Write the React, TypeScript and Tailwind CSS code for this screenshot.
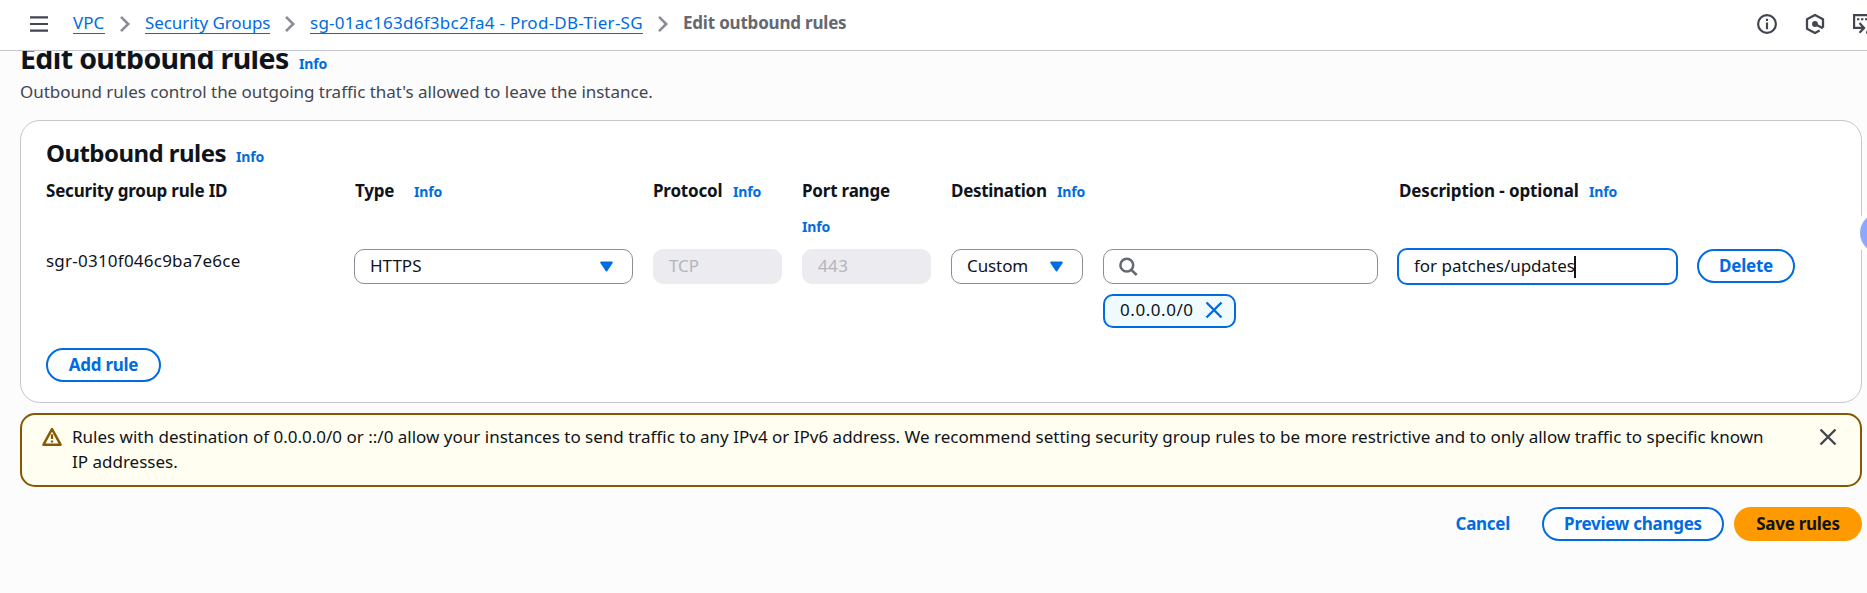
import type { ReactNode } from 'react';

function Info({ className = '' }: { className?: string }) {
  return (
    <a className={`text-[14px] leading-[25px] font-bold tracking-[-0.15px] text-[#006ce0] ${className}`} href="#info">
      Info
    </a>
  );
}

function Chevron({ className = '' }: { className?: string }) {
  return (
    <svg className={`h-[20px] w-[14px] shrink-0 ${className}`} viewBox="0 0 14 20" fill="none" stroke="#8c8c94" strokeWidth="2.6">
      <path d="M3 2.8 10.2 10 3 17.2" />
    </svg>
  );
}

function Caret() {
  return (
    <svg className="h-[11px] w-[13px] shrink-0" viewBox="0 0 13 11" fill="#006ce0" stroke="#006ce0" strokeWidth="2" strokeLinejoin="round">
      <path d="M1.2 1.5h10.6L6.5 9.5z" />
    </svg>
  );
}

function Cross({ className = '' }: { className?: string }) {
  return (
    <svg className={`h-[18px] w-[18px] shrink-0 ${className}`} viewBox="0 0 18 18" fill="none" stroke="currentColor" strokeWidth="2.4">
      <path d="M1.5 1.5 16.5 16.5M16.5 1.5 1.5 16.5" />
    </svg>
  );
}

function Label({ children, className = '' }: { children: ReactNode; className?: string }) {
  return <span className={`text-[17px] leading-[25px] font-bold tracking-[-0.2px] whitespace-nowrap ${className}`}>{children}</span>;
}

function Button({ children, className = '' }: { children: ReactNode; className?: string }) {
  return (
    <button
      className={`flex h-[34px] items-center justify-center rounded-full border-2 border-[#006ce0] bg-white pb-[2px] text-[17px] leading-[25px] font-bold tracking-[-0.26px] whitespace-nowrap text-[#006ce0] ${className}`}
    >
      {children}
    </button>
  );
}

export default function App() {
  return (
    <div className="h-[593px] w-full overflow-hidden bg-[#fcfcfd] font-['Noto_Sans',sans-serif] text-[17px] leading-[25px] text-[#0f141a]">
      <header className="flex h-[51px] items-start overflow-hidden border-b border-[#c6c6cd] bg-white">
        <svg className="mt-[14px] ml-[29px] h-[20px] w-[20px] shrink-0" viewBox="0 0 20 20" stroke="#424650" strokeWidth="2.2">
          <path d="M1 3.4h18M1 10h18M1 16.6h18" />
        </svg>
        <nav className="mt-[10px] ml-[24px] flex items-start leading-[26px] whitespace-nowrap text-[#006ce0]">
          <a className="h-[24px] w-[32px] border-b border-[#006ce0]" href="#vpc">VPC</a>
          <Chevron className="mt-[4px] ml-[13px]" />
          <a className="ml-[13px] h-[24px] w-[125px] border-b border-[#006ce0] tracking-[-0.09px]" href="#groups">Security Groups</a>
          <Chevron className="mt-[4px] ml-[13px]" />
          <a className="ml-[13px] h-[24px] w-[333px] border-b border-[#006ce0] tracking-[0.26px]" href="#group">sg-01ac163d6f3bc2fa4 - Prod-DB-Tier-SG</a>
          <Chevron className="mt-[4px] ml-[13px]" />
          <span className="ml-[13px] font-bold tracking-[-0.2px] text-[#656871]">Edit outbound rules</span>
        </nav>
        <div className="mt-[13px] -mr-[9px] ml-auto flex shrink-0 items-center">
          <svg className="h-[22px] w-[22px]" viewBox="0 0 22 22" fill="none" stroke="#424650" strokeWidth="2.2">
            <circle cx="11" cy="11" r="8.9" />
            <path d="M11 5.8v2.2M11 9.6v6.6" />
          </svg>
          <svg className="ml-[26px] h-[22px] w-[22px]" viewBox="0 0 22 22" fill="none" stroke="#424650" strokeWidth="2.3" strokeLinejoin="round">
            <path d="M19 14.8V6.2L11 2 3 6.2v9.6L11 20l4.6-2.5" />
            <path d="M11 11l7.8 4.2" />
            <circle cx="11" cy="11" r="1.8" fill="#424650" />
          </svg>
          <svg className="ml-[26px] h-[22px] w-[24px]" viewBox="0 0 24 22" fill="none" stroke="#424650" strokeWidth="2.2">
            <path d="M22 10V2.1H2.1v12.8h8.5M7.5 10l4.6 4.9-4.6 4.9" />
            <path d="M5 6.2h14" strokeDasharray="2.4 1.6" strokeWidth="2" />
            <path d="M14 19.3h8" />
          </svg>
        </div>
      </header>

      <main className="h-[542px] overflow-hidden pr-[5px] pl-[20px]">
        <div className="-mt-[12px] flex items-baseline">
          <h1 className="w-[269px] text-[28.5px] leading-[38px] font-bold tracking-[-0.62px] whitespace-nowrap">Edit outbound rules</h1>
          <Info className="ml-[10px]" />
        </div>
        <p className="mt-[2px] tracking-[-0.02px] text-[#424650]">
          Outbound rules control the outgoing traffic that's allowed to leave the instance.
        </p>

        <section className="mt-[16px] h-[283px] rounded-[20px] border border-[#c6c6cd] bg-white pt-[17px] pl-[25px]">
          <div className="flex h-[30px] items-baseline">
            <h2 className="w-[180px] text-[24px] leading-[30px] font-bold tracking-[-0.55px] whitespace-nowrap">Outbound rules</h2>
            <Info className="ml-[10px]" />
          </div>

          <div className="mt-[10px] grid h-[71px] grid-cols-[308px_299px_149px_149px_152px_294px_300px] items-start">
            <Label>Security group rule ID</Label>
            <div className="flex items-baseline">
              <Label className="w-[40px] pl-px">Type</Label>
              <Info className="ml-[20px]" />
            </div>
            <div className="flex items-baseline">
              <Label className="w-[70px]">Protocol</Label>
              <Info className="ml-[10px]" />
            </div>
            <div className="flex flex-col items-start">
              <Label>Port range</Label>
              <Info className="mt-[11px]" />
            </div>
            <div className="col-span-2 flex items-baseline">
              <Label className="w-[96px] tracking-[-0.3px]">Destination</Label>
              <Info className="ml-[10px]" />
            </div>
            <div className="flex items-baseline pl-[2px]">
              <Label className="w-[180px] tracking-[-0.13px]">Description - optional</Label>
              <Info className="ml-[10px]" />
            </div>
          </div>

          <div className="grid h-[79px] grid-cols-[308px_299px_149px_149px_152px_294px_300px_98px] items-start">
            <span className="-mt-px tracking-[0.23px]">sgr-0310f046c9ba7e6ce</span>
            <div className="flex h-[35px] w-[279px] items-center justify-between rounded-[10px] border border-[#8c8c94] pr-[19px] pl-[15px]">
              <span className="-mt-[2px]">HTTPS</span>
              <Caret />
            </div>
            <div className="flex h-[35px] w-[129px] items-center rounded-[10px] bg-[#ebebf0] pb-[2px] pl-[16px] text-[#b4b4bb]">TCP</div>
            <div className="flex h-[35px] w-[129px] items-center rounded-[10px] bg-[#ebebf0] pb-[2px] pl-[16px] tracking-[0.4px] text-[#b4b4bb]">443</div>
            <div className="flex h-[35px] w-[132px] items-center justify-between rounded-[10px] border border-[#8c8c94] pr-[19px] pl-[15px]">
              <span className="-mt-[2px] tracking-[-0.1px]">Custom</span>
              <Caret />
            </div>
            <div>
              <div className="flex h-[35px] w-[275px] items-center rounded-[10px] border border-[#8c8c94] pl-[14px]">
                <svg className="h-[20px] w-[20px]" viewBox="0 0 20 20" fill="none" stroke="#656871" strokeWidth="2.5">
                  <circle cx="8.8" cy="8.2" r="6.4" />
                  <path d="M13.3 12.8l5.4 5.2" />
                </svg>
              </div>
              <div className="mt-[10px] flex h-[34px] w-[133px] items-center rounded-[10px] border-2 border-[#006ce0] bg-[#f0fbff] pl-[15px]">
                <span className="-mt-[3px] w-[73px] tracking-[0.55px]">0.0.0.0/0</span>
                <Cross className="-mt-[3px] ml-[12px] text-[#006ce0]" />
              </div>
            </div>
            <div className="-mt-px flex h-[37px] w-[281px] items-center rounded-[10px] border-2 border-[#006ce0] bg-white pl-[15px]">
              <span className="-mt-[2px] w-[160px] tracking-[-0.02px] whitespace-nowrap">for patches/updates</span>
              <span className="h-[22px] w-[2px] shrink-0 bg-[#0f141a]" />
            </div>
            <Button className="w-[98px]">Delete</Button>
          </div>

          <Button className="mt-[20px] w-[115px]">Add rule</Button>
        </section>

        <section className="mt-[10px] flex h-[74px] items-start rounded-[15px] border-2 border-[#855900] bg-[#fffef0] pt-[9px] pl-[20px]">
          <svg className="mt-[3px] h-[20px] w-[20px] shrink-0" viewBox="0 0 20 20" fill="none" stroke="#855900" strokeWidth="2.5" strokeLinejoin="round">
            <path d="M10 2 18.5 17.7h-17z" />
            <path d="M10 7.2v4.8M10 13.4v2.2" strokeWidth="2.3" />
          </svg>
          <p className="ml-[10px] w-[1703px] shrink-0">
            Rules with destination of 0.0.0.0/0 or ::/0 allow your instances to send traffic to any IPv4 or IPv6 address. We recommend setting
            security group rules to be more restrictive and to only allow traffic to specific known IP addresses.
          </p>
          <Cross className="mt-[4px] ml-[44px] text-[#424650]" />
        </section>

        <footer className="mt-[20px] flex items-center justify-end">
          <a className="mr-[32px] pb-[2px] font-bold tracking-[-0.28px] text-[#006ce0]" href="#cancel">Cancel</a>
          <Button className="w-[182px]">Preview changes</Button>
          <button className="ml-[10px] flex h-[34px] w-[128px] items-center justify-center rounded-full bg-[#ff9900] pb-[2px] font-bold tracking-[-0.28px]">
            Save rules
          </button>
        </footer>
      </main>

      <div className="fixed top-[208px] -right-[38px] h-[50px] w-[50px] rounded-full bg-white p-[5px]">
        <div className="h-full w-full rounded-full bg-[#8fa8ff]" />
      </div>
    </div>
  );
}
